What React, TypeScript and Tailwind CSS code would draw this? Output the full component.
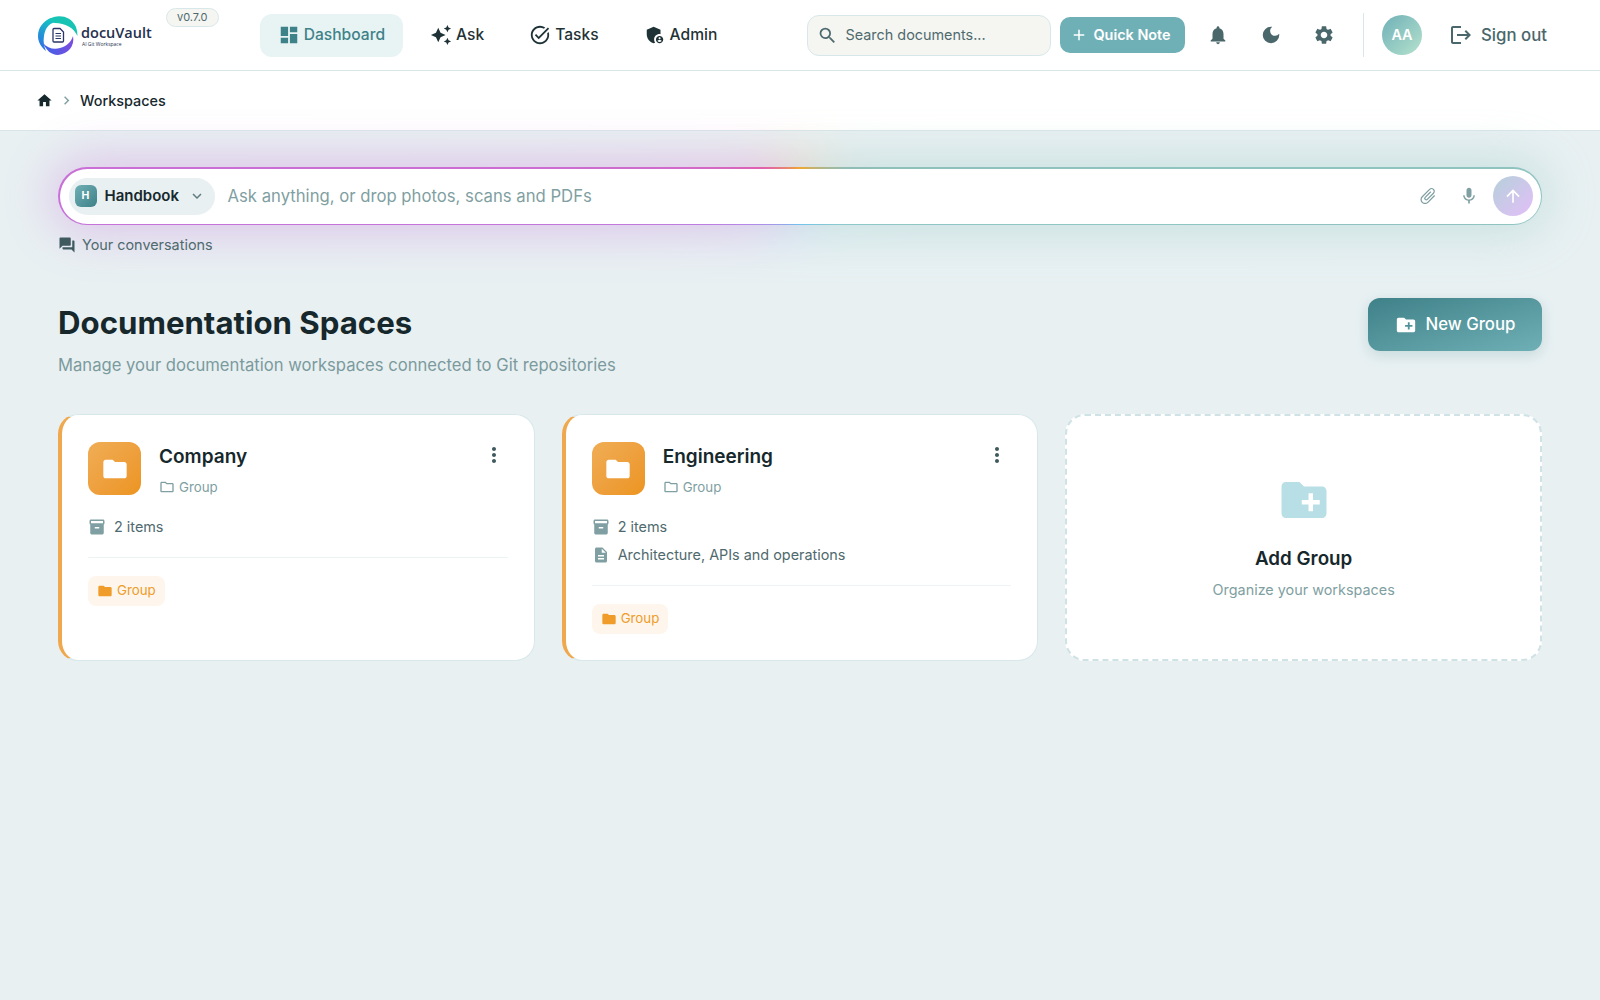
import {
  MdDashboard, MdAutoAwesome, MdOutlineTaskAlt, MdAdminPanelSettings, MdSearch, MdAdd,
  MdNotifications, MdDarkMode, MdSettings, MdLogout, MdHome, MdChevronRight, MdQuestionAnswer,
  MdCreateNewFolder, MdFolder, MdOutlineFolder, MdInventory2, MdDescription, MdMoreVert,
  MdAttachFile, MdMic, MdArrowUpward, MdExpandMore,
} from 'react-icons/md'

function Logo() {
  return (
    <svg viewBox="0 0 40 40" className="w-10 h-10 shrink-0">
      <defs>
        <linearGradient id="lg-left" x1="0.6" y1="0" x2="0.3" y2="1">
          <stop offset="0" stopColor="#14c4c0" />
          <stop offset="1" stopColor="#2f6fe8" />
        </linearGradient>
        <linearGradient id="lg-bottom" x1="0" y1="0.6" x2="1" y2="0.6">
          <stop offset="0" stopColor="#3a63e6" />
          <stop offset="1" stopColor="#7c4ce0" />
        </linearGradient>
      </defs>
      <path d="M11 4C19 -1 33 0 38 12C39 15 39.500 18 39.500 21C36 13 27 8 17 8C14.500 7.500 12.500 6 11 4Z" fill="#17c3b2" />
      <path d="M13 3C5 6 0 13 0 21C0 27 3 32 8 36C6 31 5 27 6 21C7 14 10 9 17 7C15.500 6.500 14 5 13 3Z" fill="url(#lg-left)" />
      <path d="M5 28C9 33 16 35 22 33C29 31 33 27 35 21C37 31 30 39 20 40C13 40 8 35 5 28Z" fill="url(#lg-bottom)" />
      <path d="M15 14.500a1 1 0 0 1 1-1h6l3.500 3.500v9a1 1 0 0 1-1 1H16a1 1 0 0 1-1-1Z" fill="#fff" stroke="#2d3668" strokeWidth="1.300" />
      <path d="M17.500 18.500h5.500M17.500 21h5.500M17.500 23.500h5.500" stroke="#2d3668" strokeWidth="1.100" />
    </svg>
  )
}

function NavItem({ icon: Icon, label, active }: { icon: any; label: string; active?: boolean }) {
  return (
    <a
      className={`flex items-center h-[43px] px-[18px] gap-1 rounded-xl text-[15.6px] font-medium ${
        active ? 'bg-[#e8f3f4] text-[#3d8289]' : 'text-[#1f3337]'
      }`}
    >
      <Icon className="w-[22px] h-[22px]" />
      {label}
    </a>
  )
}

function GroupCard({ name, description }: { name: string; description?: string }) {
  return (
    <div className="h-[247px] bg-white rounded-[20px] border border-[#d8e8ea] border-l-4 border-l-[#f0a84e] pl-[26px] pr-[26px] pt-[26px]">
      <div className="flex items-start">
        <div className="mt-[1px] w-[53px] h-[53px] rounded-xl bg-gradient-to-br from-[#f0ad55] to-[#ec941e] flex items-center justify-center text-white">
          <MdFolder className="w-7 h-7" />
        </div>
        <div className="ml-[18px] flex-1 pt-[1px]">
          <h3 className="text-[19px] leading-[30px] font-semibold text-[#16282c]">{name}</h3>
          <div className="mt-[5px] flex items-center gap-[4px] text-[13.3px] leading-5 text-[#7f9fa2]">
            <MdOutlineFolder className="w-4 h-4" />
            Group
          </div>
        </div>
        <MdMoreVert className="w-6 h-6 text-[#3f5a5f] mt-[2px] mr-[2px]" />
      </div>
      <div className="mt-[19px] flex flex-col gap-[6px] text-[14.4px] text-[#4f6a6e]">
        <div className="flex items-center gap-[8px] h-[22px]">
          <MdInventory2 className="w-[18px] h-[18px] text-[#7f9fa2]" />
          2 items
        </div>
        {description && (
          <div className="flex items-center gap-[8px] h-[22px]">
            <MdDescription className="w-[18px] h-[18px] text-[#7f9fa2]" />
            {description}
          </div>
        )}
      </div>
      <div className="mt-[19px] border-t border-[#edf4f5]" />
      <div className="mt-[18px] inline-flex items-center gap-[4px] h-[30px] px-[9px] rounded-lg bg-[#fef6ec] text-[13.3px] text-[#ef9c2b]">
        <MdFolder className="w-4 h-4" />
        Group
      </div>
    </div>
  )
}

export default function App() {
  const rainbow =
    'bg-[conic-gradient(#f0a830_0deg,#8fbdb5_60deg,#8ecaca_120deg,#70c4ee_180deg,#b48ae8_240deg,#c870d8_270deg,#e060b0_305deg,#f0a830_360deg)]'

  return (
    <div className="min-h-screen bg-[#e8f0f2] font-['Inter',sans-serif]">
      {/* top bar */}
      <header className="h-[71px] bg-white border-b border-[#d8e6e9] flex items-center pl-[38px] pr-[53px]">
        <div className="flex items-center">
          <Logo />
          <div className="ml-[3px] font-['Open_Sans',sans-serif] text-[#25304f]">
            <div className="text-[14.500px] leading-[17px] font-semibold">docuVault</div>
            <div className="text-[5px] leading-[6px] font-medium pl-[1px]">AI Git Workspace</div>
          </div>
        </div>
        <span className="self-start mt-[8px] ml-[14px] h-[19px] w-[53px] flex items-center justify-center rounded-full bg-[#f5f6f2] border border-[#d8e8ea] text-[11px] text-[#4f6a6e]">
          v0.7.0
        </span>
        <nav className="ml-[41px] flex items-center gap-[9px]">
          <NavItem icon={MdDashboard} label="Dashboard" active />
          <NavItem icon={MdAutoAwesome} label="Ask" />
          <NavItem icon={MdOutlineTaskAlt} label="Tasks" />
          <NavItem icon={MdAdminPanelSettings} label="Admin" />
        </nav>
        <div className="ml-auto flex items-center">
          <div className="w-[244px] h-[41px] rounded-xl bg-[#f5f6f2] border border-[#d8e8ea] flex items-center pl-[9px] gap-[8px] text-[14.4px] text-[#4f6a6e]">
            <MdSearch className="w-[21px] h-[21px]" />
            Search documents...
          </div>
          <button className="ml-[9px] w-[125px] h-[36px] rounded-[10px] bg-[#6fb0b7] text-white text-[14.4px] font-semibold flex items-center justify-center gap-[5px] pr-[3px]">
            <MdAdd className="w-[18px] h-[18px]" />
            Quick Note
          </button>
          <div className="ml-[22px] flex items-center gap-[31px] text-[#4a676b]">
            <MdNotifications className="w-[22px] h-[22px]" />
            <MdDarkMode className="w-[22px] h-[22px]" />
            <MdSettings className="w-[22px] h-[22px]" />
          </div>
          <div className="ml-[28px] w-[1.5px] h-[44px] bg-[#d8e8ea]" />
          <div className="ml-[18px] w-10 h-10 rounded-full bg-gradient-to-br from-[#6fb0b7] to-[#b5e2cd] flex items-center justify-center text-white text-[14.4px] font-semibold">
            AA
          </div>
          <div className="ml-[27px] flex items-center gap-[8px] text-[16.8px] font-medium text-[#4a676b]">
            <MdLogout className="w-[24px] h-[24px]" />
            <span className="mt-[2px]">Sign out</span>
          </div>
        </div>
      </header>

      {/* breadcrumb */}
      <div className="h-[60px] bg-white border-b border-[#d8e6e9] flex items-center pl-[36px] text-[14.4px] font-medium text-[#16282c]">
        <MdHome className="w-[17px] h-[17px]" />
        <MdChevronRight className="ml-[5px] w-[17px] h-[17px] text-[#7f9fa2]" />
        <span className="ml-[5px]">Workspaces</span>
      </div>

      <main className="px-[58px]">
        {/* ask bar */}
        <div className="relative mt-[36px]">
          <div className={`absolute -inset-[8px] blur-xl opacity-35 rounded-[40px] ${rainbow}`} />
          <div className={`relative h-[58px] rounded-[29px] p-[1.5px] ${rainbow}`}>
            <div className="h-full rounded-[28px] bg-white flex items-center pl-[9px] pr-[8px]">
              <div className="h-[37px] w-[146px] rounded-full bg-[#e8f0f2] flex items-center pl-[6px]">
                <span className="w-[22px] h-[22px] rounded-md bg-gradient-to-br from-[#6fb0b7] to-[#3f8188] flex items-center justify-center text-white text-[10.5px] font-bold">
                  H
                </span>
                <span className="ml-[8px] text-[15px] font-semibold text-[#16282c]">Handbook</span>
                <MdExpandMore className="ml-[9px] w-[18px] h-[18px] text-[#5f7d81]" />
              </div>
              <span className="ml-[13px] mt-[2px] text-[16.7px] text-[#7f9fa2]">Ask anything, or drop photos, scans and PDFs</span>
              <MdAttachFile className="ml-auto w-5 h-5 rotate-45 text-[#7f9fa2]" />
              <MdMic className="ml-[21px] w-5 h-5 text-[#7f9fa2]" />
              <span className="ml-[14px] w-10 h-10 rounded-full bg-gradient-to-br from-[#b4d0da] to-[#e2bef8] flex items-center justify-center text-white">
                <MdArrowUpward className="w-5 h-5" />
              </span>
            </div>
          </div>
        </div>
        <div className="relative mt-[10px] flex items-center gap-[6px] text-[14.4px] text-[#4f6a6e] h-[20px]">
          <MdQuestionAnswer className="w-[18px] h-[18px] text-[#3f5a5f]" />
          Your conversations
        </div>

        {/* heading */}
        <div className="mt-[44px] flex items-start justify-between">
          <div>
            <h1 className="text-[31.2px] leading-[48px] font-bold text-[#16282c]">Documentation Spaces</h1>
            <p className="mt-[6px] text-[16.64px] leading-6 text-[#7b9a9d]">
              Manage your documentation workspaces connected to Git repositories
            </p>
          </div>
          <button className="-mt-[1px] w-[174px] h-[53px] rounded-xl bg-gradient-to-br from-[#3f8188] to-[#6fb0b7] shadow-[0_4px_14px_rgba(63,129,136,0.2)] text-white text-[16.8px] font-medium flex items-center justify-center gap-[9px]">
            <MdCreateNewFolder className="w-[22px] h-[22px]" />
            New Group
          </button>
        </div>

        {/* cards */}
        <div className="mt-[37px] grid grid-cols-3 gap-[27px]">
          <GroupCard name="Company" />
          <GroupCard name="Engineering" description="Architecture, APIs and operations" />
          <div className="h-[247px] bg-white rounded-[20px] border-2 border-dashed border-[#cfe2e5] flex flex-col items-center">
            <MdCreateNewFolder className="mt-[57px] w-[54px] h-[54px] text-[#b8dee6]" />
            <h3 className="mt-[18px] text-[18.8px] leading-7 font-semibold text-[#16282c]">Add Group</h3>
            <p className="mt-[6px] text-[14.4px] leading-[22px] text-[#7f9fa2]">Organize your workspaces</p>
          </div>
        </div>
      </main>
    </div>
  )
}
